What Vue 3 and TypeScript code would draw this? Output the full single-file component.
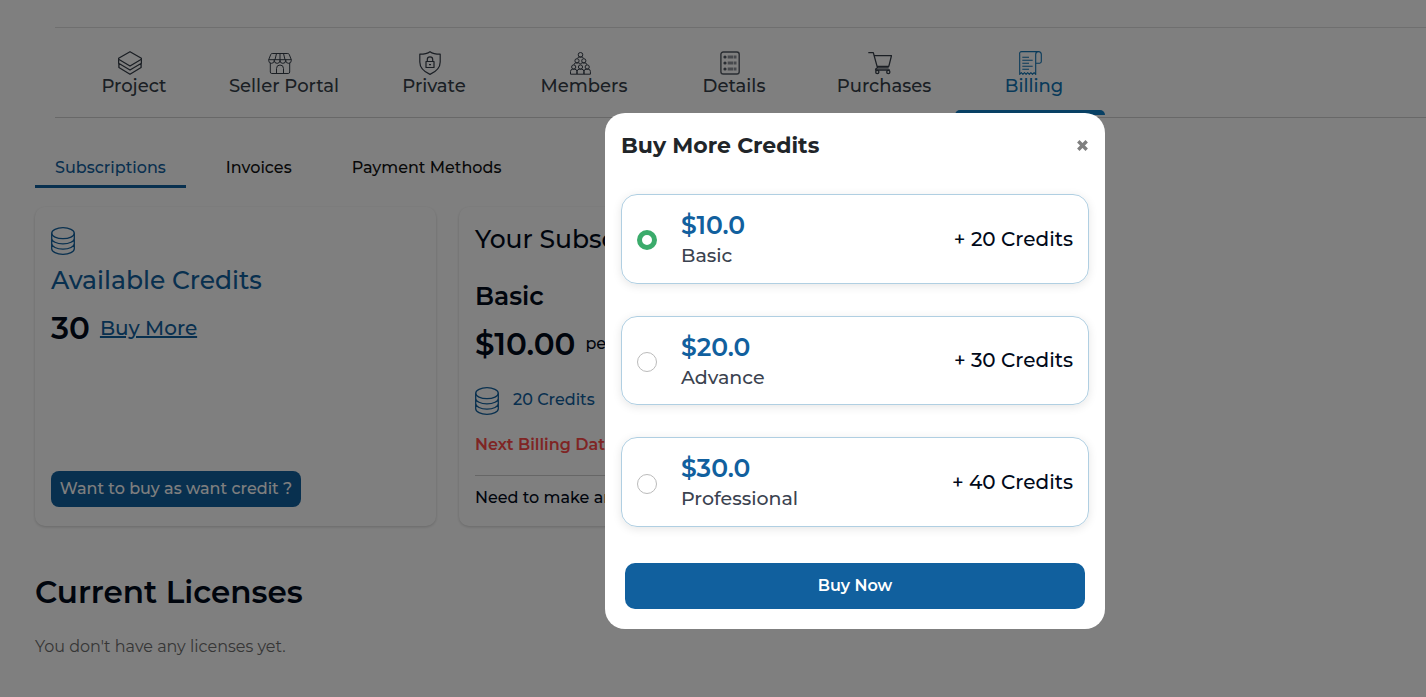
<script setup lang="ts">
import { ref } from 'vue'

interface Tab {
  id: string
  label: string
}
interface Plan {
  id: string
  price: string
  name: string
  credits: number
}

const tabs: Tab[] = [
  { id: 'project', label: 'Project' },
  { id: 'seller', label: 'Seller Portal' },
  { id: 'private', label: 'Private' },
  { id: 'members', label: 'Members' },
  { id: 'details', label: 'Details' },
  { id: 'purchases', label: 'Purchases' },
  { id: 'billing', label: 'Billing' },
]
const activeTab = ref('billing')

const subTabs: Tab[] = [
  { id: 'subscriptions', label: 'Subscriptions' },
  { id: 'invoices', label: 'Invoices' },
  { id: 'payment', label: 'Payment Methods' },
]
const activeSubTab = ref('subscriptions')

const plans: Plan[] = [
  { id: 'basic', price: '$10.0', name: 'Basic', credits: 20 },
  { id: 'advance', price: '$20.0', name: 'Advance', credits: 30 },
  { id: 'professional', price: '$30.0', name: 'Professional', credits: 40 },
]
const selectedPlan = ref('basic')
const modalOpen = ref(true)
</script>

<template>
  <div class="page">
    <nav class="main-nav">
      <button
        v-for="tab in tabs"
        :key="tab.id"
        class="main-tab"
        :class="{ active: tab.id === activeTab }"
        @click="activeTab = tab.id"
      >
        <svg class="tab-icon" viewBox="0 0 24 24" width="24" height="24">
          <g v-if="tab.id === 'project'" stroke-width="1.3">
            <path d="M12 .7 23.4 7.3v1L12 15 .6 8.3v-1z" />
            <path d="M.6 8.3v4L12 19l11.4-6.7v-4M.9 12.6v3.900L12 23.200l11.100-6.700v-3.900" />
          </g>
          <g v-else-if="tab.id === 'seller'" stroke-width="1">
            <path d="M4.200 2.500h15.600q1 0 1.400.9l2.100 5.300H.7l2.100-5.300q.4-.9 1.400-.9zM8.500 2.500 7 8.700M12 2.500v6.200M15.500 2.500 17 8.700" />
            <path d="M.7 8.700v.8a2.800 2.800 0 0 0 5.600 0v-.8 .8a2.800 2.800 0 0 0 5.700 0v-.8 .8a2.800 2.800 0 0 0 5.700 0v-.8 .8a2.800 2.800 0 0 0 5.600 0v-.8" />
            <path d="M2.300 12v9q0 1.500 1.500 1.500h16.400q1.500 0 1.500-1.500v-9M8.500 22.500v-5a3.500 3.500 0 0 1 7 0v5" />
          </g>
          <g v-else-if="tab.id === 'private'" stroke-width="1.200">
            <path d="M12 .7C9.400 2.600 5.600 3.200 1.800 3.200V11c0 6 4.200 9.700 10.200 12.400C18 20.700 22.200 17 22.200 11V3.200C18.400 3.200 14.600 2.600 12 .7z" />
            <path d="M8 10.500h8v6H8zM9.300 10.500v-2a2.700 2.700 0 0 1 5.400 0v2M11 13.700h2" />
          </g>
          <g v-else-if="tab.id === 'members'" stroke-width="1">
            <circle cx="12.500" cy="3.800" r="2.300" />
            <circle cx="9" cy="9.800" r="2.100" />
            <circle cx="15.800" cy="9.800" r="2.100" />
            <circle cx="5.700" cy="16" r="2.100" />
            <circle cx="12.500" cy="16" r="2.100" />
            <circle cx="19.200" cy="16" r="2.100" />
            <path d="M9.600 7.300q.3-1.300 1.600-1.300h2.600q1.300 0 1.600 1.300M6 13.700q.2-1.800 1.800-1.800h2.600q1.400 0 2 1.300.6-1.300 2-1.300H17q1.600 0 1.800 1.800" />
            <path d="M2.500 23.200v-2.700q0-2.300 2.200-2.300h2q2.200 0 2.200 2.300v2.700zM9.100 23.200v-2.700q0-2.300 2.400-2.300h2q2.400 0 2.400 2.300v2.700zM16 23.200v-2.700q0-2.300 2.200-2.300h2q2.200 0 2.200 2.300v2.700z" />
          </g>
          <g v-else-if="tab.id === 'details'" stroke-width="1.400" opacity=".85">
            <rect x="2.900" y="1" width="18.300" height="22" rx="2.300" />
            <g class="solid" stroke="none">
              <circle cx="7" cy="6" r="1.600" />
              <circle cx="7" cy="12" r="1.600" />
              <circle cx="7" cy="18" r="1.600" />
            </g>
            <path class="soft" stroke-width="3.200" d="M9.700 6h5.600m.6 0h2.600M9.700 12h5.600m.6 0h2.600M9.700 18h5.600m.6 0h2.600" />
          </g>
          <g v-else-if="tab.id === 'purchases'" stroke-width="1.300">
            <path d="M.3 1.700h5L9.500 16.800h11.200M6.300 4.700h17.200l-2.700 10.600H9.200M9.500 16.800q-2 .5-2 2.200h14.300" />
            <circle cx="9.300" cy="21" r="1.600" />
            <circle cx="20.300" cy="21" r="1.600" />
          </g>
          <g v-else stroke-width="1.100">
            <path d="M17.500 12.200h4.200q1.600 0 1.600-1.600V3.400q0-2.800-2.800-2.800T17.700 3.400v20l-1.600-1.700-1.600 1.700-1.600-1.700-1.600 1.700-1.600-1.700-1.600 1.700-1.600-1.700-1.600 1.700-1.600-1.700-1.600 1.700V3.200Q1.300.6 3.700.6h16.800" />
            <path d="M4.300 6.200H11M4.300 9.200h10.400M4.300 12.200H11M4.300 15.200h10.400M4.300 18.200H11" />
          </g>
        </svg>
        <span class="tab-label">{{ tab.label }}</span>
        <span class="tab-bar"></span>
      </button>
    </nav>

    <main class="content">
      <div class="sub-nav">
        <button
          v-for="tab in subTabs"
          :key="tab.id"
          class="sub-tab"
          :class="{ active: tab.id === activeSubTab }"
          @click="activeSubTab = tab.id"
        >
          {{ tab.label }}
        </button>
      </div>

      <div class="cards">
        <section class="card credits-card">
          <svg class="coins" viewBox="0 0 24 28" width="24" height="28">
            <ellipse cx="12" cy="6.200" rx="11.300" ry="5.500" />
            <path d="M.7 6.200v15.600c0 3 5 5.500 11.300 5.500s11.300-2.500 11.300-5.500V6.200M.7 11.400c0 3 5 5.500 11.300 5.500s11.300-2.500 11.300-5.500M.7 16.600c0 3 5 5.500 11.300 5.500s11.300-2.500 11.300-5.500" />
          </svg>
          <h3 class="card-title available">Available Credits</h3>
          <div class="amount-row">
            <span class="amount">30</span>
            <a class="buy-more" @click="modalOpen = true">Buy More</a>
          </div>
          <button class="want">Want to buy as want credit ?</button>
        </section>

        <section class="card plan-card">
          <h3 class="card-title">Your Subscription</h3>
          <h4 class="plan-name">Basic</h4>
          <div class="amount-row">
            <span class="amount">$10.00</span>
            <span class="period">per month</span>
          </div>
          <div class="plan-credits">
            <svg class="coins" viewBox="0 0 24 28" width="24" height="28">
              <ellipse cx="12" cy="6.200" rx="11.300" ry="5.500" />
              <path d="M.7 6.200v15.600c0 3 5 5.500 11.300 5.500s11.300-2.500 11.300-5.500V6.200M.7 11.400c0 3 5 5.500 11.300 5.500s11.300-2.500 11.300-5.500M.7 16.600c0 3 5 5.500 11.300 5.500s11.300-2.500 11.300-5.500" />
            </svg>
            <span>20 Credits</span>
          </div>
          <p class="next-billing">Next Billing Date</p>
          <p class="need">Need to make any changes?</p>
        </section>
      </div>

      <h2 class="licenses">Current Licenses</h2>
      <p class="empty">You don't have any licenses yet.</p>
    </main>

    <div v-if="modalOpen" class="overlay">
      <div class="modal" role="dialog">
        <header class="modal-head">
          <h2>Buy More Credits</h2>
          <button class="close" aria-label="Close" @click="modalOpen = false">
            <svg viewBox="0 0 11 11" width="11" height="11">
              <path d="M1.300 1.300l8.400 8.400M9.700 1.300l-8.400 8.400" />
            </svg>
          </button>
        </header>
        <label v-for="plan in plans" :key="plan.id" class="option">
          <input v-model="selectedPlan" type="radio" name="plan" :value="plan.id" />
          <span class="option-text">
            <span class="option-price">{{ plan.price }}</span>
            <span class="option-name">{{ plan.name }}</span>
          </span>
          <span class="option-credits">+ {{ plan.credits }} Credits</span>
        </label>
        <button class="buy-now">Buy Now</button>
      </div>
    </div>
  </div>
</template>

<style>
body {
  margin: 0;
  overflow: hidden;
}
</style>

<style scoped>
.page {
  box-sizing: border-box;
  height: 697px;
  padding-top: 27px;
  overflow: hidden;
  background: #fff;
  color: #010a1a;
  font-family: Montserrat, Inter, 'Open Sans', sans-serif;
  font-size: 16px;
  font-weight: 500;
}
h2, h3, h4, p {
  margin: 0;
}
button {
  padding: 0;
  border: 0;
  background: none;
  font: inherit;
  color: inherit;
  cursor: pointer;
}

.main-nav {
  display: flex;
  height: 89px;
  margin-left: 55px;
  border-top: 1px solid #dedede;
  border-bottom: 1px solid #d0d0d0;
}
.main-tab {
  display: flex;
  flex-direction: column;
  align-items: center;
  width: 150px;
  padding-top: 23px;
  color: #363e49;
}
.main-tab.active {
  color: #1275b5;
}
.tab-icon {
  display: block;
  flex: none;
  fill: none;
  stroke: currentColor;
  stroke-linejoin: round;
}
.solid {
  fill: currentColor;
}
.soft {
  opacity: .65;
}
.tab-label {
  padding: 1px 0 0 8px;
  font-size: 18px;
  line-height: 21px;
  white-space: nowrap;
}
.tab-bar {
  width: 150px;
  height: 5px;
  margin-top: 13px;
  border-radius: 5px 5px 0 0;
}
.active .tab-bar {
  background: #1080c8;
}

.content {
  padding-left: 35px;
}
.sub-nav {
  display: flex;
  gap: 20px;
  padding-top: 39px;
}
.sub-tab {
  padding: 0 20px 7px;
  border-bottom: 3px solid transparent;
  line-height: 21px;
  color: #111;
  white-space: nowrap;
}
.sub-tab.active {
  border-color: #11609e;
  color: #11609e;
}

.cards {
  display: flex;
  gap: 23px;
  margin-top: 19px;
}
.card {
  box-sizing: border-box;
  display: flex;
  flex-direction: column;
  width: 401px;
  height: 319px;
  padding: 20px 16px 19px;
  border-radius: 10px;
  box-shadow: 0 1px 3px rgba(0, 0, 0, .18);
}
.coins {
  flex: none;
  fill: none;
  stroke: #11609e;
  stroke-width: 1.3;
}
.card-title {
  font-size: 25px;
  font-weight: 500;
  line-height: 32px;
}
.available {
  margin-top: 9px;
  color: #11609e;
}
.amount-row {
  display: flex;
  align-items: center;
  margin-top: 12px;
  line-height: 40px;
}
.amount {
  font-size: 31px;
  font-weight: 600;
}
.buy-more {
  margin-left: 10px;
  color: #11609e;
  font-size: 20px;
  text-decoration: underline;
  cursor: pointer;
}
.want {
  box-sizing: border-box;
  align-self: flex-start;
  width: 250px;
  height: 36px;
  margin-top: auto;
  padding-bottom: 1px;
  border-radius: 8px;
  background: #11609e;
  color: #fff;
  white-space: nowrap;
}
.plan-card {
  padding-top: 16px;
}
.plan-name {
  margin-top: 25px;
  font-size: 25px;
  font-weight: 600;
  line-height: 32px;
}
.period {
  margin-left: 10px;
}
.plan-credits {
  display: flex;
  align-items: center;
  gap: 14px;
  margin-top: 23px;
  color: #11609e;
  line-height: 24px;
}
.plan-credits span {
  margin-top: -3px;
}
.next-billing {
  margin-top: 20px;
  padding-bottom: 20px;
  border-bottom: 1px solid #ccc;
  color: #ff4a48;
  font-weight: 600;
  line-height: 20px;
}
.need {
  margin-top: 11px;
  line-height: 21px;
}
.licenses {
  margin-top: 46px;
  font-size: 31px;
  font-weight: 600;
  line-height: 40px;
}
.empty {
  margin-top: 24px;
  color: #6c6c6c;
  font-weight: 400;
  line-height: 21px;
}

.overlay {
  position: fixed;
  inset: 0;
  background: rgba(0, 0, 0, .5);
}
.modal {
  box-sizing: border-box;
  width: 500px;
  height: 516px;
  margin: 113px 0 0 605px;
  padding: 16px 16px 20px;
  border-radius: 20px;
  background: #fff;
}
.modal-head {
  display: flex;
  justify-content: space-between;
  align-items: center;
  height: 32px;
  margin-bottom: 33.2px;
  color: #212529;
}
.modal-head h2 {
  font-size: 22px;
  font-weight: 700;
}
.close {
  display: flex;
  margin-right: 1px;
}
.close path {
  stroke: #7f7f7f;
  stroke-width: 3.4;
}
.option {
  box-sizing: border-box;
  display: flex;
  align-items: center;
  height: 89.6px;
  margin-bottom: 32px;
  padding: 0 15px;
  border: 1px solid #b0cfe2;
  border-radius: 16px;
  box-shadow: 0 2px 10px rgba(0, 0, 0, .1);
}
.option input {
  appearance: none;
  box-sizing: border-box;
  flex: none;
  width: 20px;
  height: 20px;
  margin: 2.8px 24px 0 0;
  border: 1px solid #bbb;
  border-radius: 50%;
  background: #fff;
}
.option input:checked {
  border: 5.5px solid #3bab6b;
}
.option-text {
  display: flex;
  flex-direction: column;
  padding-top: 1.2px;
}
.option-price {
  color: #11609e;
  font-size: 25px;
  font-weight: 600;
  line-height: 32px;
}
.option-name {
  color: #3b4350;
  font-size: 19px;
  line-height: 29px;
}
.option-credits {
  margin: 0 0 .6px auto;
  font-size: 20px;
  line-height: 24px;
}
.buy-now {
  display: block;
  width: 460px;
  height: 46px;
  margin: 36px auto 0;
  border-radius: 10px;
  background: #11609e;
  color: #fff;
  font-weight: 600;
}
</style>
